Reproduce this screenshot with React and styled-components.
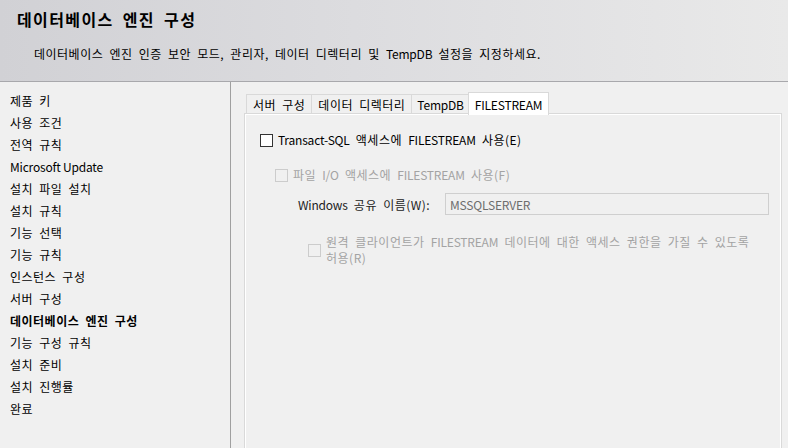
import React from "react";
import styled, { createGlobalStyle } from "styled-components";

const Global = createGlobalStyle`
  html, body { margin: 0; padding: 0; }
  body {
    width: 788px;
    height: 448px;
    overflow: hidden;
    background: #f0f0f0;
    font-family: "Noto Sans CJK KR", "Noto Sans", sans-serif;
    font-size: 12px;
    color: #000;
  }
`;

const Window = styled.div`
  width: 788px;
  height: 448px;
  display: flex;
  flex-direction: column;
  overflow: hidden;
  background: #f0f0f0;
  letter-spacing: 0.5px;
  word-spacing: 3px;
`;

const En = styled.span`
  letter-spacing: -0.2px;
  word-spacing: 0;
`;

const Header = styled.header`
  height: 82px;
  flex: none;
  box-sizing: border-box;
  border-bottom: 1px solid #a8a8ac;
  background: linear-gradient(90deg, #d1d1d5 0%, #dcdcdf 45%, #e9e9e9 100%);
  padding: 6px 0 0 17px;
`;

const Title = styled.h1`
  margin: 0;
  font-size: 16px;
  font-weight: 700;
  line-height: 26px;
  letter-spacing: 1.4px;
  word-spacing: 4px;
`;

const Subtitle = styled.p`
  margin: 13px 0 0 17px;
  font-size: 12px;
  line-height: 18px;
`;

const Main = styled.div`
  flex: 1;
  display: flex;
  min-height: 0;
`;

const Nav = styled.nav`
  width: 231px;
  flex: none;
  box-sizing: border-box;
  border-right: 1px solid #a0a0a0;
  padding: 8px 0 0 10px;
  display: flex;
  flex-direction: column;
`;

const NavItem = styled.div`
  line-height: 22px;
  height: 22px;
  font-weight: ${(p) => (p.$active ? 700 : 400)};
  color: #000;
`;

const Content = styled.section`
  flex: 1;
  display: flex;
  flex-direction: column;
  padding: 10px 6px 0 13px;
  min-width: 0;
`;

const TabStrip = styled.div`
  display: flex;
  align-items: flex-end;
  height: 22px;
  padding-left: 2px;
  position: relative;
  z-index: 1;
`;

const Tab = styled.div`
  box-sizing: border-box;
  height: ${(p) => (p.$selected ? "23px" : "20px")};
  margin: ${(p) => (p.$selected ? "0 -2px -1px -2px" : "0")};
  padding: 0 ${(p) => p.$pad}px;
  display: flex;
  align-items: center;
  justify-content: center;
  border: 1px solid #d9d9d9;
  border-bottom: ${(p) => (p.$selected ? "none" : "1px solid #d9d9d9")};
  border-left-width: ${(p) => (p.$first || p.$selected ? "1px" : "0")};
  background: ${(p) => (p.$selected ? "#ffffff" : "#f0f0f0")};
  white-space: nowrap;
  position: relative;
  z-index: ${(p) => (p.$selected ? 2 : 1)};
`;

const Panel = styled.div`
  flex: 1;
  box-sizing: border-box;
  border: 1px solid #d9d9d9;
  box-shadow: inset 1px 1px 0 #ffffff, inset -1px 0 0 #ffffff;
  margin-top: -1px;
  margin-bottom: -12px;
  padding: 18px 12px 0 15px;
  display: flex;
  flex-direction: column;
`;

const CheckRow = styled.label`
  display: flex;
  align-items: center;
  gap: 5px;
  margin-left: ${(p) => p.$indent || 0}px;
  margin-top: ${(p) => p.$top || 0}px;
  color: ${(p) => (p.$disabled ? "#a3a3a3" : "#000")};
  line-height: 16px;
`;

const CheckText = styled.span`
  line-height: 16px;
`;

const Box = styled.span`
  width: 13px;
  height: 13px;
  box-sizing: border-box;
  flex: none;
  border: 1px solid ${(p) => (p.$disabled ? "#cccccc" : "#333333")};
  background: ${(p) => (p.$disabled ? "#f0f0f0" : "#ffffff")};
`;

const FieldRow = styled.div`
  display: flex;
  align-items: center;
  margin: 10px 0 0 38px;
`;

const FieldLabel = styled.span`
  width: 147px;
  flex: none;
  color: #222;
`;

const Input = styled.div`
  flex: 1;
  height: 22px;
  box-sizing: border-box;
  border: 1px solid #cfcfcf;
  background: #f0f0f0;
  color: #6d6d6d;
  padding: 0 4px;
  display: flex;
  align-items: center;
  letter-spacing: -0.2px;
`;

const navItems = [
  "제품 키",
  "사용 조건",
  "전역 규칙",
  "Microsoft Update",
  "설치 파일 설치",
  "설치 규칙",
  "기능 선택",
  "기능 규칙",
  "인스턴스 구성",
  "서버 구성",
  "데이터베이스 엔진 구성",
  "기능 구성 규칙",
  "설치 준비",
  "설치 진행률",
  "완료",
];

const tabs = [
  { label: "서버 구성", pad: 6 },
  { label: "데이터 디렉터리", pad: 6 },
  { label: "TempDB", en: true, pad: 5 },
  { label: "FILESTREAM", en: true, selected: true, pad: 6 },
];

export default function App() {
  return (
    <Window>
      <Global />
      <Header>
        <Title>데이터베이스 엔진 구성</Title>
        <Subtitle>
          데이터베이스 엔진 인증 보안 모드, 관리자, 데이터 디렉터리 및 <En>TempDB</En> 설정을 지정하세요.
        </Subtitle>
      </Header>
      <Main>
        <Nav>
          {navItems.map((n) => (
            <NavItem key={n} $active={n === "데이터베이스 엔진 구성"}>
              {n === "Microsoft Update" ? <En>{n}</En> : n}
            </NavItem>
          ))}
        </Nav>
        <Content>
          <TabStrip>
            {tabs.map((t, i) => (
              <Tab key={t.label} $first={i === 0} $selected={t.selected} $pad={t.pad}>
                {t.en ? <En>{t.label}</En> : t.label}
              </Tab>
            ))}
          </TabStrip>
          <Panel>
            <CheckRow>
              <Box />
              <CheckText>
                <En>Transact-SQL</En> 액세스에 <En>FILESTREAM</En> 사용(E)
              </CheckText>
            </CheckRow>
            <CheckRow $indent={15} $top={19} $disabled>
              <Box $disabled />
              <CheckText>
                파일 <En>I/O</En> 액세스에 <En>FILESTREAM</En> 사용(F)
              </CheckText>
            </CheckRow>
            <FieldRow>
              <FieldLabel>
                <En>Windows</En> 공유 이름(W):
              </FieldLabel>
              <Input>MSSQLSERVER</Input>
            </FieldRow>
            <CheckRow $indent={48} $top={19} $disabled>
              <Box $disabled />
              <CheckText>
                원격 클라이언트가 <En>FILESTREAM</En> 데이터에 대한 액세스 권한을 가질 수 있도록
                <br />
                허용(R)
              </CheckText>
            </CheckRow>
          </Panel>
        </Content>
      </Main>
    </Window>
  );
}
